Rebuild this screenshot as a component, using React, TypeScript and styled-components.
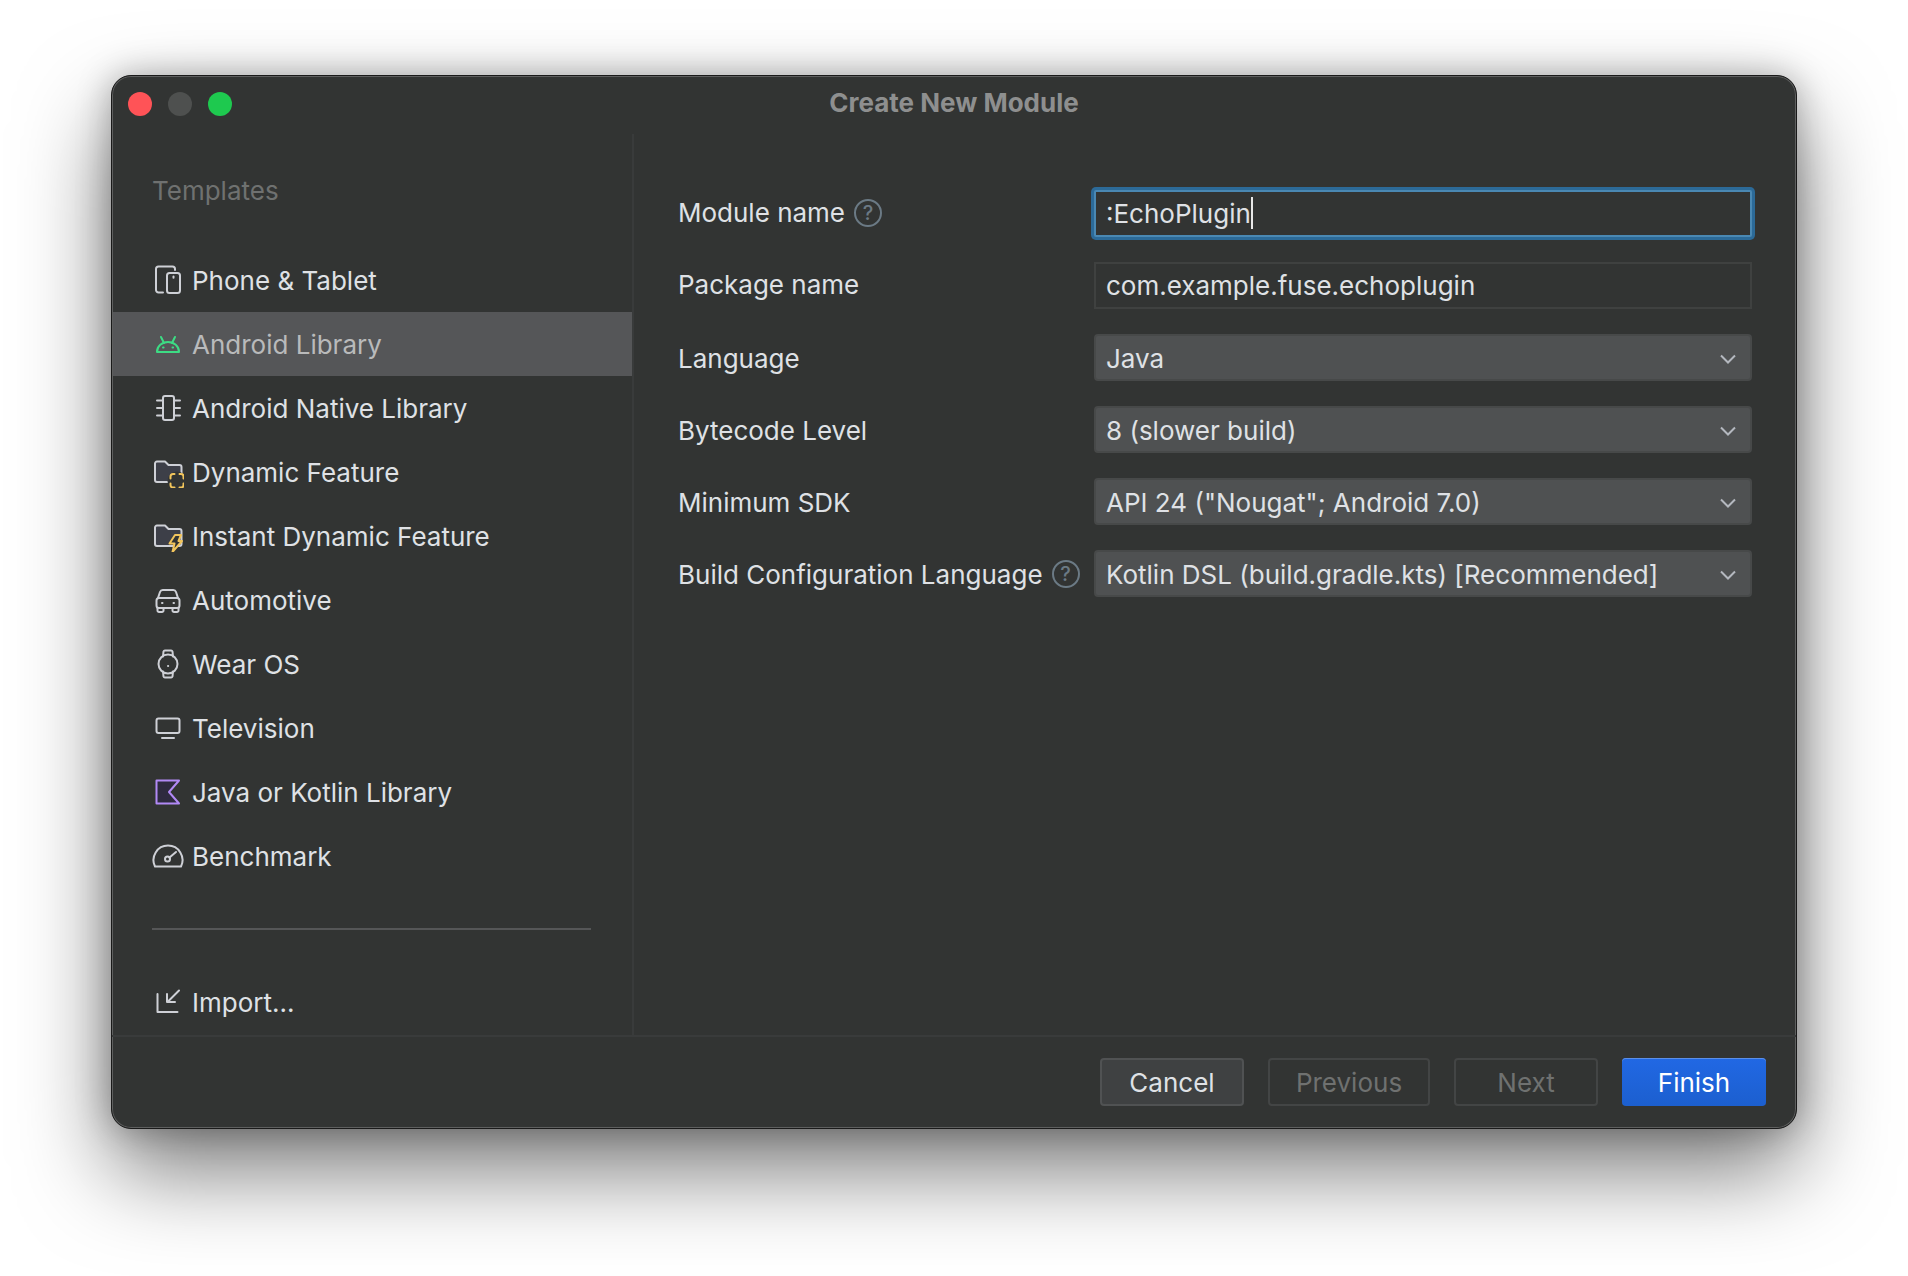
import { ReactNode } from "react";
import styled, { createGlobalStyle } from "styled-components";

const GlobalStyle = createGlobalStyle`
  html, body {
    margin: 0;
    padding: 0;
    background: #ffffff;
  }
  body {
    font-family: Inter, "Liberation Sans", sans-serif;
    overflow: hidden;
  }
`;

const Page = styled.div`
  width: 1908px;
  height: 1276px;
  box-sizing: border-box;
  padding: 75px 111px 147px;
  background: #ffffff;
`;

const Window = styled.div`
  height: 100%;
  display: flex;
  flex-direction: column;
  box-sizing: border-box;
  background: #323433;
  border-radius: 20px;
  border: 1px solid #1a1a1a;
  box-shadow: inset 0 0 0 1px #5e5f5f, 0 42px 90px rgba(0, 0, 0, 0.52),
    0 0 34px rgba(0, 0, 0, 0.28);
  overflow: hidden;
`;

const TitleBar = styled.div`
  height: 58px;
  flex: none;
  position: relative;
  display: flex;
  align-items: center;
  justify-content: center;
`;

const Lights = styled.div`
  position: absolute;
  left: 16px;
  top: 16px;
  display: flex;
  gap: 16px;
`;

const Light = styled.span<{ $color: string }>`
  width: 24px;
  height: 24px;
  border-radius: 50%;
  background: ${(p) => p.$color};
`;

const Title = styled.div`
  font-size: 26px;
  font-weight: 700;
  color: #8e8f8f;
  margin-top: -5px;
`;

const Body = styled.div`
  flex: 1;
  display: flex;
  min-height: 0;
`;

const Sidebar = styled.div`
  width: 521px;
  flex: none;
  box-sizing: border-box;
  border-right: 2px solid #393b3b;
  display: flex;
  flex-direction: column;
  margin-left: 1px;
`;

const SideTitle = styled.div`
  font-size: 26px;
  color: #6f7170;
  padding-left: 39px;
  height: 114px;
  flex: none;
  line-height: 114px;
  box-sizing: border-box;
`;

const Row = styled.div<{ $selected?: boolean }>`
  height: 64px;
  flex: none;
  display: flex;
  align-items: center;
  padding-left: 39px;
  gap: 8px;
  font-size: 26px;
  color: ${(p) => (p.$selected ? "#b9babb" : "#dfe1e5")};
  background: ${(p) => (p.$selected ? "#555658" : "transparent")};
`;

const SideRule = styled.div`
  height: 2px;
  flex: none;
  background: #555657;
  margin: 40px 41px 40px 39px;
`;

const Form = styled.div`
  flex: 1;
  display: grid;
  grid-template-columns: 416px 658px;
  grid-auto-rows: 47px;
  row-gap: 25px;
  align-content: start;
  padding: 56px 0 0 44px;
`;

const Label = styled.div<{ $raised?: boolean }>`
  display: flex;
  align-items: center;
  gap: 9px;
  padding: ${(p) => (p.$raised ? "0 0 2px" : "1px 0 0")};
  font-size: 26px;
  color: #dfe1e5;
`;

const Help = styled.span`
  width: 28px;
  height: 28px;
  flex: none;
  box-sizing: border-box;
  border: 2px solid #6b7a85;
  border-radius: 50%;
  color: #6b7a85;
  font-size: 20px;
  font-weight: 500;
  display: flex;
  align-items: center;
  justify-content: center;
`;

const Field = styled.div<{ $focused?: boolean }>`
  display: flex;
  align-items: center;
  box-sizing: border-box;
  padding: 0 0 1px 10px;
  font-size: 26px;
  color: #dfe1e5;
  background: #323433;
  border: 2px solid ${(p) => (p.$focused ? "#4a88b3" : "#3f4140")};
  box-shadow: ${(p) => (p.$focused ? "0 0 0 3px #2c6a98" : "none")};
  border-radius: ${(p) => (p.$focused ? "2px" : "0")};
`;

const Caret = styled.span`
  width: 2px;
  height: 32px;
  background: #e8e8e8;
`;

const Select = styled.div`
  display: flex;
  align-items: center;
  justify-content: space-between;
  box-sizing: border-box;
  padding: 2px 14px 0 10px;
  font-size: 26px;
  color: #dfe1e5;
  background: #4f5152;
  border: 2px solid #474949;
  border-radius: 4px;
`;

const Footer = styled.div`
  height: 93px;
  flex: none;
  box-sizing: border-box;
  border-top: 2px solid #393b3b;
  display: flex;
  justify-content: flex-end;
  align-items: flex-start;
  gap: 24px;
  padding: 21px 30px 0 0;
`;

const Button = styled.div<{ $kind?: "primary" | "disabled"; $wide?: boolean }>`
  width: ${(p) => (p.$wide ? "162px" : "144px")};
  height: 48px;
  box-sizing: border-box;
  display: flex;
  align-items: center;
  justify-content: center;
  border-radius: 4px;
  font-size: 26px;
  color: ${(p) =>
    p.$kind === "primary"
      ? "#ffffff"
      : p.$kind === "disabled"
      ? "#6f7170"
      : "#dfe1e5"};
  background: ${(p) =>
    p.$kind === "primary"
      ? "linear-gradient(#2168e4, #1c5fcf)"
      : p.$kind === "disabled"
      ? "transparent"
      : "#3f4142"};
  border: 2px solid
    ${(p) =>
      p.$kind === "primary"
        ? "transparent"
        : p.$kind === "disabled"
        ? "#434545"
        : "#505253"};
  ${(p) => p.$kind === "primary" && "box-shadow: inset 0 1px 0 #5c8fe8;"}
  ${(p) => p.$kind === "primary" && "border: none;"}
`;

const Glyph = styled.svg`
  width: 32px;
  height: 32px;
  flex: none;
  fill: none;
  stroke: #ced0d6;
  stroke-width: 2;
  stroke-linecap: round;
  stroke-linejoin: round;
`;

const Chevron = () => (
  <svg width="16" height="10" viewBox="0 0 16 10" fill="none" stroke="#b4b8bf" strokeWidth="2">
    <path d="M1 1.5 8 8.5 15 1.5" />
  </svg>
);

const folder = (
  <path
    d="M3 7.500a2 2 0 0 1 2-2h8l3.500 3.500h11a2 2 0 0 1 2 2v13a2 2 0 0 1-2 2H5a2 2 0 0 1-2-2z"
    fill="#3d3f48"
  />
);

const icons: Record<string, ReactNode> = {
  phone: (
    <>
      <path d="M23 6V5a2.500 2.500 0 0 0-2.500-2.500h-14A2.500 2.500 0 0 0 4 5v21a2.500 2.500 0 0 0 2.500 2.500H11" />
      <rect x="15" y="9" width="13" height="20" rx="2.500" />
      <path d="M21.500 12.500v1.200" />
    </>
  ),
  android: (
    <g stroke="#3ddc84">
      <path d="M5 24c0-6 5-10 11-10s11 4 11 10z" />
      <path d="M9 9l3 6M23 9l-3 6" />
      <path d="M11 19.500h.6M20.500 19.500h.6" />
    </g>
  ),
  native: (
    <>
      <rect x="11" y="4" width="11" height="24" rx="2" />
      <path d="M5 8.500h6M5 16h6M5 23.500h6M22 8.500h6M22 16h6M22 23.500h6" />
    </>
  ),
  dynamic: (
    <>
      {folder}
      <circle cx="25" cy="25" r="9.500" fill="#323433" stroke="none" />
      <path
        stroke="#f2c55c"
        d="M18.500 22.500v-2a2.500 2.500 0 0 1 2.500-2.500h1.500M27.500 18H29a2.500 2.500 0 0 1 2.500 2.500v2M31.500 27.500V29a2.500 2.500 0 0 1-2.500 2.500h-1.500M22.500 31.500H21a2.500 2.500 0 0 1-2.500-2.500v-1.500"
      />
    </>
  ),
  instant: (
    <>
      {folder}
      <path
        d="M23 15h6l-2.500 6H30L20.500 32l2-8.500H17.500z"
        fill="#323433"
        stroke="#f2c55c"
      />
    </>
  ),
  car: (
    <>
      <path d="M6 14l2-6a3 3 0 0 1 3-2h10a3 3 0 0 1 3 2l2 6" />
      <rect x="4.500" y="14" width="23" height="10" rx="2.500" />
      <path d="M5.500 24v2.500a1.500 1.500 0 0 0 1.500 1.500h3a1.500 1.500 0 0 0 1.500-1.500V24M20.500 24v2.500a1.500 1.500 0 0 0 1.500 1.500h3a1.500 1.500 0 0 0 1.500-1.500V24" />
      <path d="M10 19h.5M21.500 19h.5" />
    </>
  ),
  watch: (
    <>
      <circle cx="16" cy="16" r="9.500" />
      <path d="M11 8.500l.5-5a1.500 1.500 0 0 1 1.500-1h6a1.500 1.500 0 0 1 1.500 1l.5 5M11 23.500l.5 5a1.500 1.500 0 0 0 1.500 1h6a1.500 1.500 0 0 0 1.500-1l.5-5" />
      <path d="M16 18h.2" />
    </>
  ),
  tv: (
    <>
      <rect x="4.500" y="6.500" width="23" height="14.500" rx="2" />
      <path d="M10 26h12" />
    </>
  ),
  kotlin: (
    <path
      d="M4.500 4.500H27L17 16l10 11.500H4.500z"
      fill="#2e2a3f"
      stroke="#b189f5"
    />
  ),
  benchmark: (
    <>
      <path d="M3 26.500A14.500 14.500 0 1 1 29 26.500Z" />
      <circle cx="15.500" cy="19" r="2.500" />
      <path d="M17.500 17.500L24 12" />
    </>
  ),
  import: <path d="M5.500 8v18h20M27 4.500L15.500 16M15 8v8h8" />,
};

const templates: { name: string; icon: string; selected?: boolean }[] = [
  { name: "Phone & Tablet", icon: "phone" },
  { name: "Android Library", icon: "android", selected: true },
  { name: "Android Native Library", icon: "native" },
  { name: "Dynamic Feature", icon: "dynamic" },
  { name: "Instant Dynamic Feature", icon: "instant" },
  { name: "Automotive", icon: "car" },
  { name: "Wear OS", icon: "watch" },
  { name: "Television", icon: "tv" },
  { name: "Java or Kotlin Library", icon: "kotlin" },
  { name: "Benchmark", icon: "benchmark" },
];

function App() {
  return (
    <>
      <GlobalStyle />
      <Page>
        <Window>
          <TitleBar>
            <Lights>
              <Light $color="#ff5357" />
              <Light $color="#4e504f" />
              <Light $color="#1ec94f" />
            </Lights>
            <Title>Create New Module</Title>
          </TitleBar>
          <Body>
            <Sidebar>
              <SideTitle>Templates</SideTitle>
              {templates.map((t) => (
                <Row key={t.name} $selected={t.selected}>
                  <Glyph viewBox="0 0 32 32">{icons[t.icon]}</Glyph>
                  {t.name}
                </Row>
              ))}
              <SideRule />
              <Row>
                <Glyph viewBox="0 0 32 32">{icons.import}</Glyph>
                Import...
              </Row>
            </Sidebar>
            <Form>
              <Label $raised>
                Module name <Help>?</Help>
              </Label>
              <Field $focused>
                :EchoPlugin
                <Caret />
              </Field>
              <Label $raised>Package name</Label>
              <Field>com.example.fuse.echoplugin</Field>
              <Label>Language</Label>
              <Select>
                Java <Chevron />
              </Select>
              <Label>Bytecode Level</Label>
              <Select>
                8 (slower build) <Chevron />
              </Select>
              <Label>Minimum SDK</Label>
              <Select>
                API 24 ("Nougat"; Android 7.0) <Chevron />
              </Select>
              <Label>
                Build Configuration Language <Help>?</Help>
              </Label>
              <Select>
                Kotlin DSL (build.gradle.kts) [Recommended] <Chevron />
              </Select>
            </Form>
          </Body>
          <Footer>
            <Button>Cancel</Button>
            <Button $kind="disabled" $wide>
              Previous
            </Button>
            <Button $kind="disabled">Next</Button>
            <Button $kind="primary">Finish</Button>
          </Footer>
        </Window>
      </Page>
    </>
  );
}

export default App;
